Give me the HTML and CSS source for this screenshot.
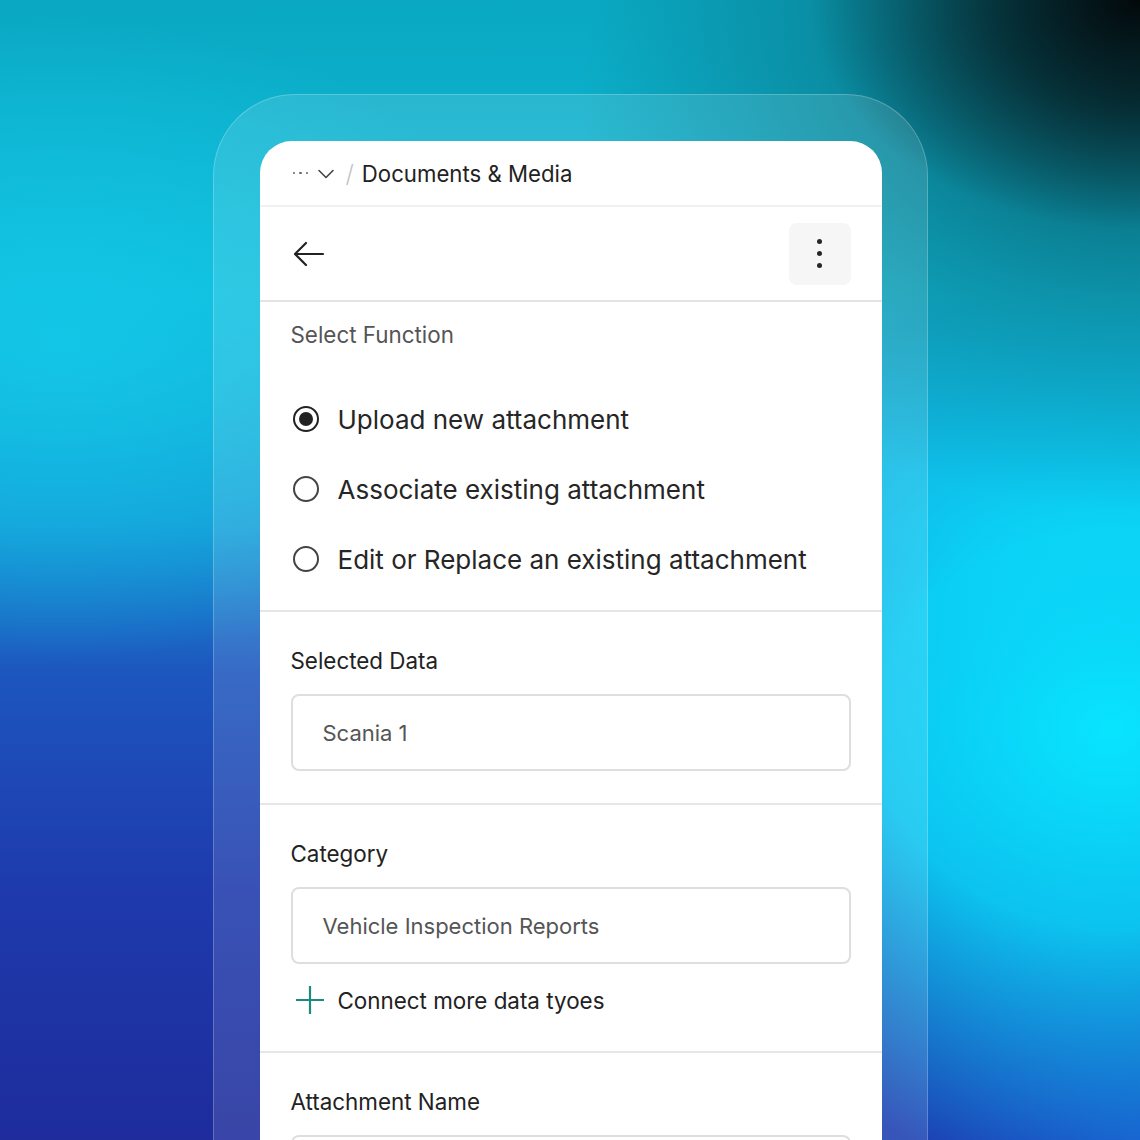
FILE: index.html
```html
<!DOCTYPE html>
<html lang="en">
<head>
<meta charset="utf-8">
<title>Documents &amp; Media</title>
<link rel="stylesheet" href="styles.css">
</head>
<body>
<div class="stage">
  <div class="frame">
    <div class="card">
      <div class="crumbs">
        <span class="dots"><i></i><i></i><i></i></span>
        <svg class="chev" width="16" height="10" viewBox="0 0 16 10"><path d="M1 1.5 L8 8.5 L15 1.5" fill="none" stroke="#444" stroke-width="1.6" stroke-linecap="round" stroke-linejoin="round"/></svg>
        <span class="slash">/</span>
        <span class="crumb-title">Documents &amp; Media</span>
      </div>
      <div class="toolbar">
        <svg class="back" width="32" height="26" viewBox="0 0 32 26"><path d="M30 13 H3 M13 2 L2 13 L13 24" fill="none" stroke="#222" stroke-width="2.2" stroke-linecap="round" stroke-linejoin="round"/></svg>
        <div class="kebab"><span></span><span></span><span></span></div>
      </div>
      <div class="section sec-func">
        <div class="muted-label">Select Function</div>
        <div class="radios">
          <div class="radio-row"><span class="radio checked"></span><span>Upload new attachment</span></div>
          <div class="radio-row"><span class="radio"></span><span>Associate existing attachment</span></div>
          <div class="radio-row"><span class="radio"></span><span>Edit or Replace an existing attachment</span></div>
        </div>
      </div>
      <div class="section">
        <div class="label">Selected Data</div>
        <div class="field">Scania 1</div>
      </div>
      <div class="section sec-cat">
        <div class="label">Category</div>
        <div class="field">Vehicle Inspection Reports</div>
        <div class="add-row">
          <svg width="30" height="30" viewBox="0 0 30 30"><path d="M15 1 V29 M1 15 H29" fill="none" stroke="#1b8c7c" stroke-width="2.2"/></svg>
          <span>Connect more data tyoes</span>
        </div>
      </div>
      <div class="section">
        <div class="label">Attachment Name</div>
        <div class="field"></div>
      </div>
    </div>
  </div>
</div>
</body>
</html>
```

FILE: styles.css
```css
* { box-sizing: border-box; }
html, body { margin: 0; padding: 0; }
body {
  font-family: "Inter", "Open Sans", "Liberation Sans", sans-serif;
  color: #222;
}
.stage {
  width: 1140px;
  height: 1140px;
  overflow: hidden;
  display: flex;
  justify-content: center;
  padding-top: 94px;
  background:
    radial-gradient(ellipse 330px 230px at 1140px 0px, rgba(3,8,10,1) 0%, rgba(3,8,10,0.6) 45%, rgba(3,8,10,0) 100%),
    radial-gradient(ellipse 560px 420px at 1140px 90px, rgba(8,72,82,0.8) 0%, rgba(8,72,82,0.35) 50%, rgba(8,72,82,0) 100%),
    radial-gradient(ellipse 520px 440px at 1110px 730px, #08e4ff 0%, rgba(8,228,255,0.8) 45%, rgba(8,228,255,0) 100%),
    radial-gradient(ellipse 420px 280px at 1140px 1140px, #1a58cc 0%, rgba(26,88,204,0) 100%),
    radial-gradient(ellipse 480px 320px at 60px 340px, rgba(20,200,232,0.9) 0%, rgba(20,200,232,0) 100%),
    linear-gradient(180deg, #0aa8c2 0%, #0fbad8 26%, #1596d6 46%, #1d56be 59%, #1e3aac 78%, #1e2c9c 100%);
}
.frame {
  width: 715px;
  flex: none;
  height: 1100px;
  padding: 46px 46px 0;
  border-radius: 82px 82px 0 0;
  background: rgba(255,255,255,0.12);
  border: 1.5px solid rgba(255,255,255,0.22);
  border-bottom: none;
}
.card {
  width: 622px;
  background: #fff;
  border-radius: 32px 32px 0 0;
  height: 1010px;
}
.crumbs {
  height: 66px;
  display: flex;
  align-items: center;
  padding-left: 33px;
  border-bottom: 2px solid #f1f1f1;
}
.dots {
  display: flex;
  gap: 4px;
  width: 25px;
}
.dots i {
  width: 2.5px;
  height: 2.5px;
  border-radius: 50%;
  background: #666;
}
.chev { margin-left: 0; margin-top: 2px; }
.slash {
  font-size: 24px;
  color: #c4c4c4;
  margin-left: 12px;
  margin-right: 8px;
  font-weight: 300;
}
.crumb-title {
  font-size: 22.2px;
  color: #222;
}
.toolbar {
  height: 95px;
  display: flex;
  align-items: center;
  justify-content: space-between;
  padding: 0 31px 0 33px;
  border-bottom: 2px solid #e4e4e4;
}
.back { margin-top: 1px; }
.kebab {
  width: 62px;
  height: 62px;
  border-radius: 8px;
  background: #f6f6f6;
  display: flex;
  flex-direction: column;
  align-items: center;
  justify-content: center;
  gap: 7px;
}
.kebab span {
  width: 5px;
  height: 5px;
  border-radius: 50%;
  background: #262626;
}
.section {
  padding: 37px 31px 32px 31px;
  border-bottom: 2px solid #e6e6e6;
}
.sec-func { padding-top: 21px; padding-bottom: 16px; }
.sec-cat { padding-bottom: 36px; }
.muted-label {
  font-size: 22.4px;
  line-height: 24px;
  color: #555;
}
.label {
  font-size: 22.4px;
  line-height: 24px;
  color: #222;
}
.radios { margin-top: 37px; }
.radio-row {
  height: 70px;
  display: flex;
  align-items: center;
  gap: 19px;
  font-size: 26px;
  color: #262626;
  padding-left: 2px;
}
.radio {
  width: 26px;
  height: 26px;
  border-radius: 50%;
  border: 2px solid #444;
  display: flex;
  align-items: center;
  justify-content: center;
  flex: none;
}
.radio.checked { border-color: #222; }
.radio.checked::after {
  content: "";
  width: 14px;
  height: 14px;
  border-radius: 50%;
  background: #222;
}
.field {
  margin-top: 21px;
  height: 77px;
  border: 2px solid #dedede;
  border-radius: 8px;
  display: flex;
  align-items: center;
  padding-left: 30px;
  font-size: 22px;
  color: #555;
}
.add-row {
  margin-top: 21px;
  height: 30px;
  display: flex;
  align-items: center;
  gap: 13px;
  padding-left: 4px;
  font-size: 22.4px;
  color: #222;
}
```
